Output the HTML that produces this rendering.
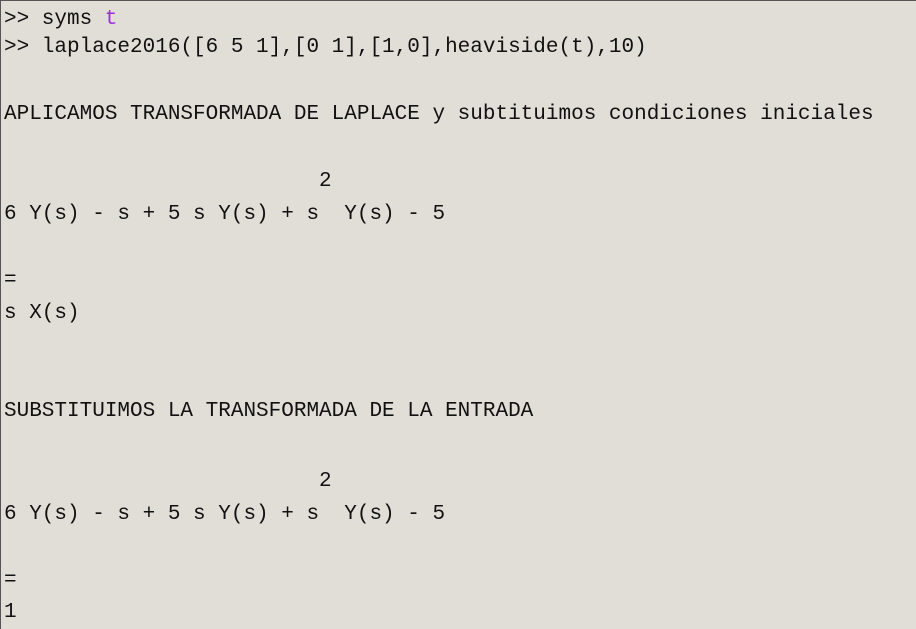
<!DOCTYPE html>
<html><head><meta charset="utf-8"><style>
html,body{margin:0;padding:0;}
body{width:916px;height:629px;background:#e1ded8;position:relative;overflow:hidden;
border-top:1px solid #555;border-left:1px solid #555;box-sizing:border-box;
font-family:"Liberation Mono",monospace;font-size:21px;color:#111;}
.l{position:absolute;left:3px;height:28px;line-height:28px;white-space:pre;}
.p{color:#9b30e0;}
</style></head><body>
<div class="l" style="top:5px">&gt;&gt; syms <span class="p">t</span></div>
<div class="l" style="top:33px">&gt;&gt; laplace2016([6 5 1],[0 1],[1,0],heaviside(t),10)</div>
<div class="l" style="top:100px">APLICAMOS TRANSFORMADA DE LAPLACE y subtituimos condiciones iniciales</div>
<div class="l" style="top:167px;left:318px">2</div>
<div class="l" style="top:200px">6 Y(s) - s + 5 s Y(s) + s  Y(s) - 5</div>
<div class="l" style="top:266px">=</div>
<div class="l" style="top:299px">s X(s)</div>
<div class="l" style="top:397px">SUBSTITUIMOS LA TRANSFORMADA DE LA ENTRADA</div>
<div class="l" style="top:467px;left:318px">2</div>
<div class="l" style="top:500px">6 Y(s) - s + 5 s Y(s) + s  Y(s) - 5</div>
<div class="l" style="top:566px">=</div>
<div class="l" style="top:598px">1</div>
</body></html>
